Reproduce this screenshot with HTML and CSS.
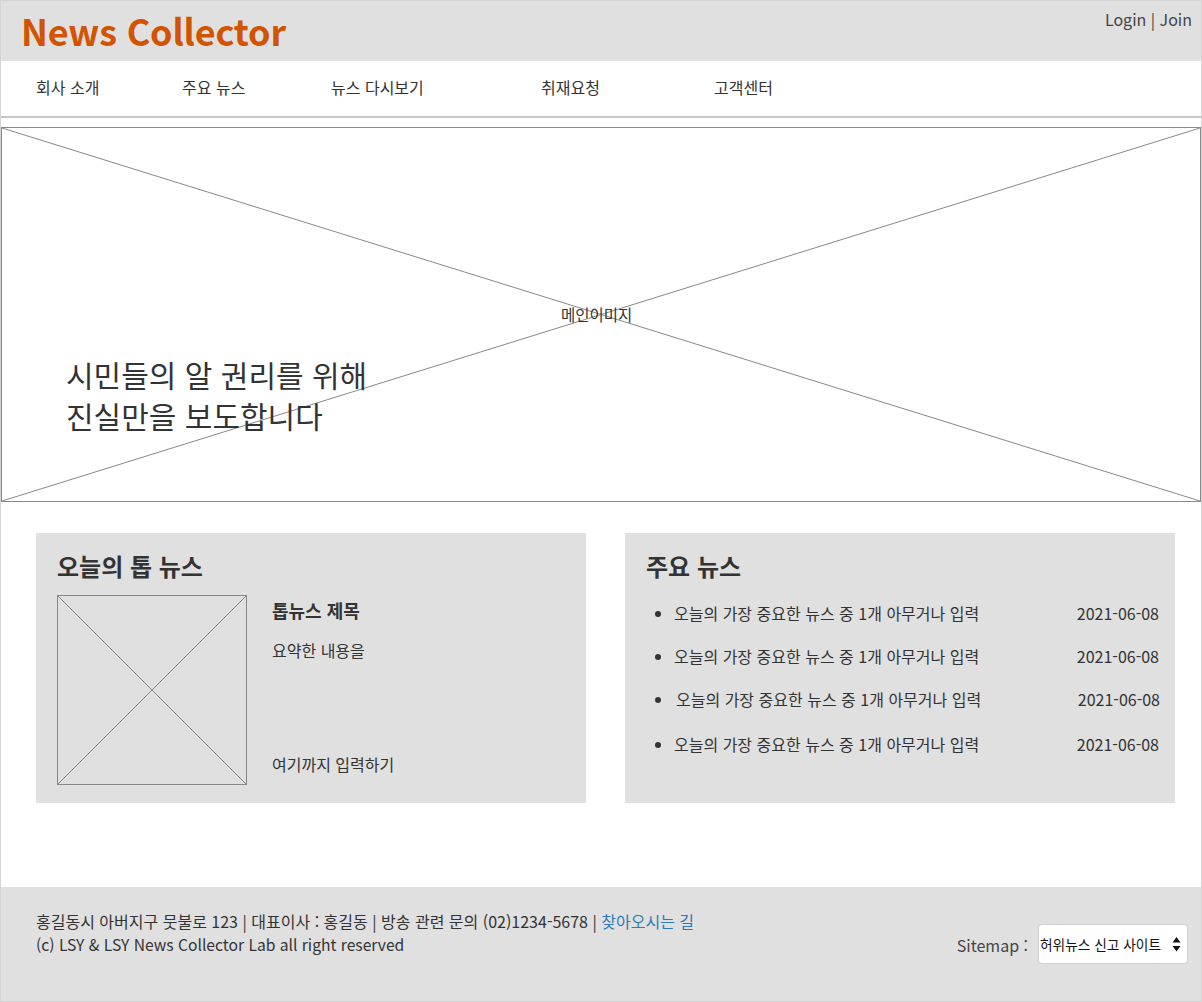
FILE: index.html
```html
<!DOCTYPE html>
<html lang="ko">
<head>
<meta charset="utf-8">
<title>News Collector</title>
<link rel="stylesheet" href="styles.css">
</head>
<body>
<div class="page">
  <header class="top">
    <h1 class="logo">News Collector</h1>
    <div class="auth">Login | Join</div>
  </header>
  <nav class="gnb">
    <a class="n1">회사 소개</a>
    <a class="n2">주요 뉴스</a>
    <a class="n3">뉴스 다시보기</a>
    <a class="n4">취재요청</a>
    <a class="n5">고객센터</a>
  </nav>
  <section class="hero">
    <svg class="xlines" viewBox="0 0 100 100" preserveAspectRatio="none"><line x1="0" y1="0" x2="100" y2="100"/><line x1="100" y1="0" x2="0" y2="100"/></svg>
    <span class="hero-label">메인이미지</span>
    <p class="slogan">시민들의 알 권리를 위해<br>진실만을 보도합니다</p>
  </section>
  <main class="cards">
    <section class="card">
      <h2 class="card-title">오늘의 톱 뉴스</h2>
      <div class="top-news">
        <div class="thumb"><svg class="xlines" viewBox="0 0 100 100" preserveAspectRatio="none"><line x1="0" y1="0" x2="100" y2="100"/><line x1="100" y1="0" x2="0" y2="100"/></svg></div>
        <div class="top-text">
          <h3 class="tn-title">톱뉴스 제목</h3>
          <p class="tn-sum">요약한 내용을</p>
          <p class="tn-end">여기까지 입력하기</p>
        </div>
      </div>
    </section>
    <section class="card">
      <h2 class="card-title">주요 뉴스</h2>
      <ul class="news-list">
        <li><span>오늘의 가장 중요한 뉴스 중 1개 아무거나 입력</span><span>2021-06-08</span></li>
        <li><span>오늘의 가장 중요한 뉴스 중 1개 아무거나 입력</span><span>2021-06-08</span></li>
        <li class="shift"><span>오늘의 가장 중요한 뉴스 중 1개 아무거나 입력</span><span>2021-06-08</span></li>
        <li><span>오늘의 가장 중요한 뉴스 중 1개 아무거나 입력</span><span>2021-06-08</span></li>
      </ul>
    </section>
  </main>
  <footer class="foot">
    <div class="info">
      <p>홍길동시 아버지구 뭇불로 123 | 대표이사 : 홍길동 | 방송 관련 문의 (02)1234-5678 | <a class="link">찾아오시는 길</a></p>
      <p class="copy">(c) LSY &amp; LSY News Collector Lab all right reserved</p>
    </div>
    <div class="sitemap">
      <span class="sm-label">Sitemap :</span>
      <div class="select">
        <span>허위뉴스 신고 사이트</span>
        <svg class="arrows" width="9" height="18" viewBox="0 0 9 18"><path d="M4.5 2 L8.5 7.5 L0.5 7.5 Z M4.5 16.5 L8.5 11 L0.5 11 Z" fill="#111"/></svg>
      </div>
    </div>
  </footer>
</div>
</body>
</html>
```
FILE: styles.css
```css
* { box-sizing: border-box; }
html, body { margin: 0; padding: 0; background: #fff; }
body {
  font-family: "Noto Sans CJK KR", "Noto Sans", sans-serif;
  color: #333;
}
.page {
  width: 1202px;
  height: 1002px;
  border: 1px solid #d4d4d4;
  display: flex;
  flex-direction: column;
}
.top {
  height: 60px;
  background: #e0e0e0;
  display: flex;
  justify-content: space-between;
  align-items: flex-start;
}
.logo {
  margin: 0;
  padding: 7px 0 0 20px;
  font-size: 36px;
  line-height: 45px;
  font-weight: 700;
  color: #d35400;
  letter-spacing: -0.2px;
}
.auth {
  padding: 6px 9px 0 0;
  font-size: 16px;
  line-height: 24px;
  color: #444;
}
.gnb {
  height: 57px;
  border-bottom: 2px solid #c6c6c6;
  font-size: 16px;
  color: #333;
  position: relative;
}
.gnb a { position: absolute; top: 14px; line-height: 24px; }
.n1 { left: 35px; }
.n2 { left: 181px; }
.n3 { left: 330px; }
.n4 { left: 540px; }
.n5 { left: 713px; }
.hero {
  margin-top: 9px;
  height: 375px;
  border: 1px solid #888;
  position: relative;
}
.xlines {
  position: absolute;
  inset: 0;
  width: 100%;
  height: 100%;
}
.xlines line { stroke: #888; stroke-width: 1; vector-effect: non-scaling-stroke; }
.hero-label {
  position: absolute;
  left: 559px;
  top: 175px;
  font-size: 15.5px;
  line-height: 22px;
  color: #333;
}
.slogan {
  position: absolute;
  left: 64px;
  top: 226px;
  margin: 0;
  font-size: 30px;
  line-height: 41px;
  font-weight: 400;
  color: #333;
}
.cards {
  flex: 1;
  display: flex;
  gap: 39px;
  padding: 31px 0 0 35px;
}
.card {
  width: 550px;
  height: 270px;
  background: #e0e0e0;
  padding: 15px 21px 0 21px;
}
.card-title {
  margin: 0;
  font-size: 24px;
  line-height: 36px;
  font-weight: 700;
  color: #333;
}
.top-news {
  display: flex;
  margin-top: 11px;
}
.thumb {
  width: 190px;
  height: 190px;
  border: 1px solid #888;
  position: relative;
  flex: none;
}
.top-text {
  margin-left: 25px;
  display: flex;
  flex-direction: column;
}
.tn-title {
  margin: 3px 0 0;
  font-size: 18px;
  line-height: 24px;
  font-weight: 700;
}
.tn-sum {
  margin: 17px 0 0;
  font-size: 16px;
  line-height: 22px;
}
.tn-end {
  margin: auto 0 10px;
  font-size: 16px;
  line-height: 22px;
}
.news-list {
  margin: 18px 0 0;
  padding: 0 0 0 28px;
  list-style: disc;
  font-size: 16px;
  line-height: 22px;
  color: #333;
}
.news-list li { margin-bottom: 21px; }
.news-list li:nth-child(3) { margin-bottom: 23px; margin-top: 1px; }
.news-list li span:last-child { float: right; margin-right: -5px; }
.news-list li.shift { padding-left: 2px; }
.news-list li.shift span:last-child { margin-right: -6px; }
.foot {
  height: 114px;
  background: #e0e0e0;
  display: flex;
  justify-content: space-between;
  padding: 23px 13px 0 35px;
}
.info p { margin: 0; font-size: 16px; line-height: 23px; color: #333; }
.info p.copy { font-size: 15.65px; }
.link { color: #2b7bb9; }
.sitemap {
  display: flex;
  align-items: center;
  align-self: flex-start;
  margin-top: 14px;
}
.sm-label { font-size: 16px; color: #444; margin-right: 10px; padding-top: 1px; }
.select {
  width: 150px;
  height: 40px;
  background: #fff;
  border: 1px solid #d0d0d0;
  border-radius: 4px;
  display: flex;
  align-items: center;
  justify-content: space-between;
  padding: 0 6px 0 1px;
  font-size: 13.7px;
  color: #111;
}
.arrows { flex: none; }
```
